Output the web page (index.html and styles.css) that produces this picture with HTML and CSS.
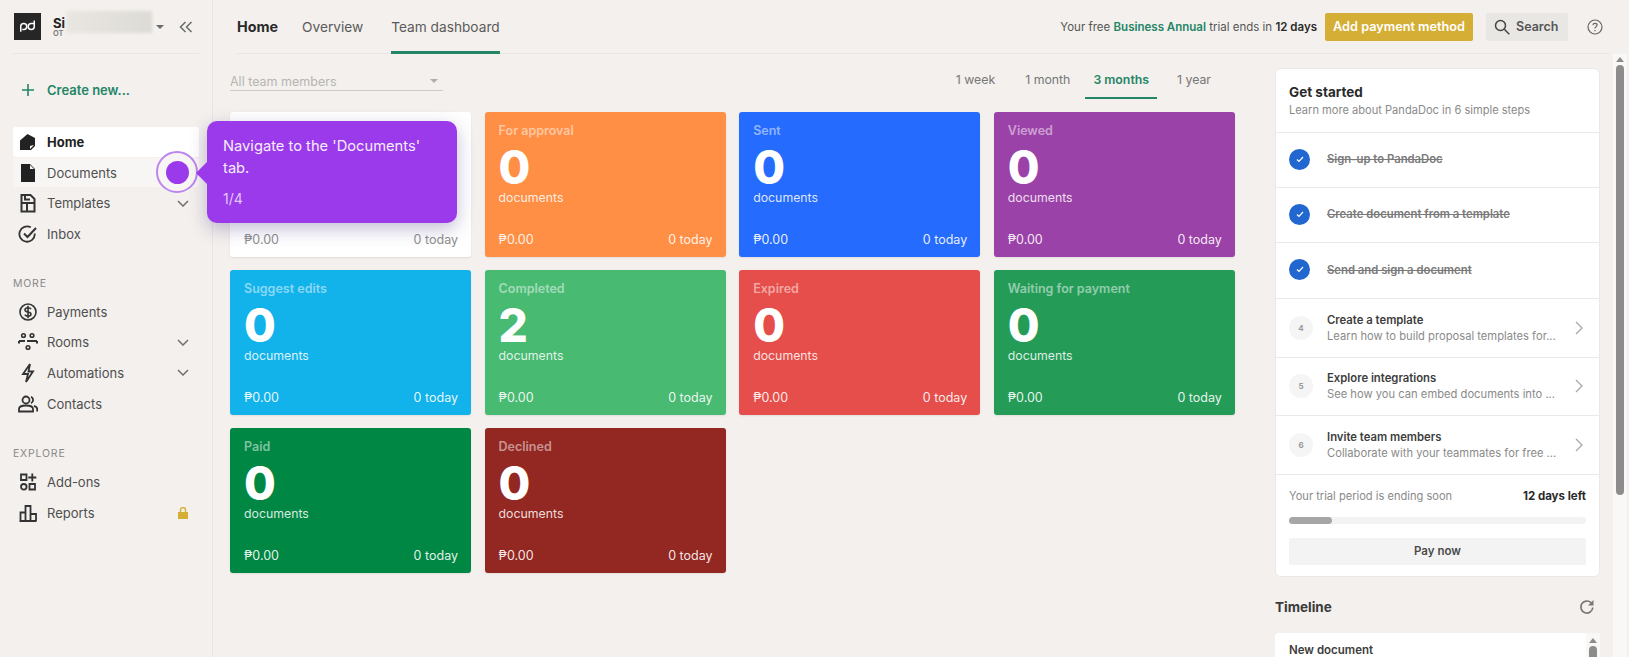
FILE: index.html
```html
<!DOCTYPE html>
<html lang="en">
<head>
<meta charset="utf-8">
<title>PandaDoc</title>
<link rel="stylesheet" href="styles.css">
</head>
<body>
<div class="app">
  <aside class="sidebar">
    <div class="account">
      <div class="logo"><svg width="28" height="28" viewBox="0 0 28 28" fill="none" stroke="#fff" stroke-width="2"><path d="M5 21v-7a4 4 0 1 1 4 4H7"/><path d="M23 6v8a4 4 0 1 1-4-4h3"/></svg></div>
      <div class="account-name"><span class="an1">Si</span><span class="an2">OT</span><span class="blur"></span></div>
      <span class="caret"></span>
      <svg class="collapse" width="14" height="12" viewBox="0 0 14 12" fill="none" stroke="#6b6b6b" stroke-width="1.5"><path d="M6.5 1 1.5 6l5 5M12.5 1l-5 5 5 5"/></svg>
    </div>
    <div class="create"><svg width="14" height="14" viewBox="0 0 14 14" stroke="#248567" stroke-width="1.6"><path d="M7 1v12M1 7h12"/></svg><span>Create new...</span></div>
    <nav class="nav">
      <a class="item active"><svg class="ic" viewBox="0 0 20 20"><path fill="#222" d="M2 8.5 9.5 2 17 6v8l-4 4H2z"/><path fill="#fff" d="m12 17 0-3 4-1z"/></svg><span>Home</span></a>
      <a class="item hover"><svg class="ic" viewBox="0 0 20 20"><path fill="#222" d="M3 1h9l5 5v13H3z"/><path fill="#f8f6f4" d="M12 2v4h4z"/></svg><span>Documents</span></a>
      <a class="item"><svg class="ic" viewBox="0 0 20 20" fill="none" stroke="#333" stroke-width="2"><path d="M3.500 2h9l4 4v12.500h-13zM3.500 10h13M9 10v8.500M7 2v4.500h5"/></svg><span>Templates</span><svg class="chev" viewBox="0 0 12 7"><path d="m1 1 5 5 5-5"/></svg></a>
      <a class="item"><svg class="ic" viewBox="0 0 20 20" fill="none" stroke="#333" stroke-width="1.8"><path d="M16.800 9.500V10a7.700 7.700 0 1 1-4-6.700"/><path stroke-width="2" d="m6 9.500 3.500 3.500L18 4"/></svg><span>Inbox</span></a>
    </nav>
    <div class="label">MORE</div>
    <nav class="nav">
      <a class="item"><svg class="ic" viewBox="0 0 20 20" fill="none" stroke="#333" stroke-width="1.600"><circle cx="10" cy="10" r="8"/><path d="M13 7.200c-.5-1-1.500-1.400-3-1.400-1.700 0-3 .8-3 2.100 0 3 6 1.300 6 4.200 0 1.300-1.300 2.100-3 2.100-1.500 0-2.600-.5-3.100-1.500M10 3.800v12.400"/></svg><span>Payments</span></a>
      <a class="item"><svg class="ic" viewBox="0 0 20 20" fill="none" stroke="#333" stroke-width="1.600"><circle cx="5.500" cy="3.500" r="1.800"/><circle cx="14" cy="3.500" r="1.800"/><circle cx="10" cy="15.500" r="1.800"/><path stroke-width="2" d="M1 9h6M9 9h10M1 9v2.500M19 9v2.500"/></svg><span>Rooms</span><svg class="chev" viewBox="0 0 12 7"><path d="m1 1 5 5 5-5"/></svg></a>
      <a class="item"><svg class="ic" viewBox="0 0 20 20" fill="none" stroke="#333" stroke-width="1.800"><path d="M12 1 5 11h5l-2 8 7-10.500h-4.500z"/></svg><span>Automations</span><svg class="chev" viewBox="0 0 12 7"><path d="m1 1 5 5 5-5"/></svg></a>
      <a class="item"><svg class="ic" viewBox="0 0 20 20" fill="none" stroke="#333" stroke-width="1.800"><circle cx="8" cy="6" r="3.500"/><path d="M1 17.500V15c0-2 2.500-3.500 7-3.500s7 1.500 7 3.500v2.500zM13 2.800a3.500 3.500 0 0 1 0 6.400M16 11.800c2 .6 3.200 1.700 3.200 3.200v2.500"/></svg><span>Contacts</span></a>
    </nav>
    <div class="label second">EXPLORE</div>
    <nav class="nav">
      <a class="item"><svg class="ic" viewBox="0 0 20 20" fill="none" stroke="#333" stroke-width="1.800"><path d="M3 2.500h5.500V8H3zM11.500 12h5.500v5.500h-5.500z"/><circle cx="5.800" cy="14.800" r="2.800"/><path d="M14.300 1.500v8M10.300 5.500h8"/></svg><span>Add-ons</span></a>
      <a class="item"><svg class="ic" viewBox="0 0 20 20" fill="none" stroke="#333" stroke-width="1.800"><path d="M1.500 18h17M2.500 18V9.500h5V18M7.500 18V3h5v15M12.500 18v-7h5.500v7"/></svg><span>Reports</span><svg class="lock" viewBox="0 0 10 12"><path fill="#d5ae35" d="M0 5h10v7H0z"/><path fill="none" stroke="#d5ae35" stroke-width="1.400" d="M2.500 5V3a2.500 2.500 0 0 1 5 0v2"/></svg></a>
    </nav>
  </aside>

  <div class="main">
    <header class="topbar">
      <div class="tabs">
        <a class="tab strong">Home</a>
        <a class="tab">Overview</a>
        <a class="tab current">Team dashboard</a>
      </div>
      <div class="trial">Your free <b class="green">Business Annual</b> trial ends in <b>12 days</b></div>
      <button class="pay">Add payment method</button>
      <button class="search"><svg width="16" height="16" viewBox="0 0 16 16" fill="none" stroke="#444" stroke-width="1.500"><circle cx="6.500" cy="6.500" r="5"/><path d="m10.300 10.300 5 5"/></svg>Search</button>
      <svg class="help" width="16" height="16" viewBox="0 0 16 16" fill="none" stroke="#666" stroke-width="1.200"><circle cx="8" cy="8" r="7"/><path d="M5.900 6.200C6 5 6.900 4.300 8 4.300c1.200 0 2.100.8 2.100 1.800 0 1.500-2.100 1.600-2.100 3.300"/><path d="M8 11v1.200"/></svg>
    </header>

    <div class="body">
      <section class="content">
        <div class="filters">
          <div class="select"><span>All team members</span><i class="caret light"></i></div>
          <div class="ranges">
            <a>1 week</a><a>1 month</a><a class="sel">3 months</a><a class="yr">1 year</a>
          </div>
        </div>
        <div class="cards">
          <div class="card white"><div class="c-foot"><span>₱0.00</span><span>0 today</span></div></div>
          <div class="card orange"><div class="c-title">For approval</div><div class="c-num">0</div><div class="c-sub">documents</div><div class="c-foot"><span>₱0.00</span><span>0 today</span></div></div>
          <div class="card blue"><div class="c-title">Sent</div><div class="c-num">0</div><div class="c-sub">documents</div><div class="c-foot"><span>₱0.00</span><span>0 today</span></div></div>
          <div class="card purple"><div class="c-title">Viewed</div><div class="c-num">0</div><div class="c-sub">documents</div><div class="c-foot"><span>₱0.00</span><span>0 today</span></div></div>
          <div class="card cyan"><div class="c-title">Suggest edits</div><div class="c-num">0</div><div class="c-sub">documents</div><div class="c-foot"><span>₱0.00</span><span>0 today</span></div></div>
          <div class="card lgreen"><div class="c-title">Completed</div><div class="c-num">2</div><div class="c-sub">documents</div><div class="c-foot"><span>₱0.00</span><span>0 today</span></div></div>
          <div class="card red"><div class="c-title">Expired</div><div class="c-num">0</div><div class="c-sub">documents</div><div class="c-foot"><span>₱0.00</span><span>0 today</span></div></div>
          <div class="card mgreen"><div class="c-title">Waiting for payment</div><div class="c-num">0</div><div class="c-sub">documents</div><div class="c-foot"><span>₱0.00</span><span>0 today</span></div></div>
          <div class="card dgreen"><div class="c-title">Paid</div><div class="c-num">0</div><div class="c-sub">documents</div><div class="c-foot"><span>₱0.00</span><span>0 today</span></div></div>
          <div class="card maroon"><div class="c-title">Declined</div><div class="c-num">0</div><div class="c-sub">documents</div><div class="c-foot"><span>₱0.00</span><span>0 today</span></div></div>
        </div>
      </section>

      <aside class="side">
        <div class="panel">
          <div class="p-head"><h2>Get started</h2><p>Learn more about PandaDoc in 6 simple steps</p></div>
          <div class="step done"><span class="tick"><svg width="8" height="7" viewBox="0 0 8 7" fill="none" stroke="#fff" stroke-width="1.200"><path d="m1 3.500 2 2 4-4.500"/></svg></span><s>Sign-up to PandaDoc</s></div>
          <div class="step done"><span class="tick"><svg width="8" height="7" viewBox="0 0 8 7" fill="none" stroke="#fff" stroke-width="1.200"><path d="m1 3.500 2 2 4-4.500"/></svg></span><s>Create document from a template</s></div>
          <div class="step done last"><span class="tick"><svg width="8" height="7" viewBox="0 0 8 7" fill="none" stroke="#fff" stroke-width="1.200"><path d="m1 3.500 2 2 4-4.500"/></svg></span><s>Send and sign a document</s></div>
          <div class="step todo"><span class="no">4</span><div class="st"><b>Create a template</b><em>Learn how to build proposal templates for...</em></div><svg class="arrow" width="8" height="14" viewBox="0 0 8 14" fill="none" stroke="#a8a8a8" stroke-width="1.300"><path d="m1 1 6 6-6 6"/></svg></div>
          <div class="step todo"><span class="no">5</span><div class="st"><b>Explore integrations</b><em>See how you can embed documents into ...</em></div><svg class="arrow" width="8" height="14" viewBox="0 0 8 14" fill="none" stroke="#a8a8a8" stroke-width="1.300"><path d="m1 1 6 6-6 6"/></svg></div>
          <div class="step todo"><span class="no">6</span><div class="st"><b>Invite team members</b><em>Collaborate with your teammates for free ...</em></div><svg class="arrow" width="8" height="14" viewBox="0 0 8 14" fill="none" stroke="#a8a8a8" stroke-width="1.300"><path d="m1 1 6 6-6 6"/></svg></div>
          <div class="p-foot">
            <div class="t-row"><span>Your trial period is ending soon</span><b>12 days left</b></div>
            <div class="bar"><div class="fill"></div></div>
            <button class="paynow">Pay now</button>
          </div>
        </div>
        <div class="tl-head"><h3>Timeline</h3><svg width="16" height="16" viewBox="0 0 16 16" fill="none" stroke="#777" stroke-width="1.700"><path d="M13.800 8.500A6 6 0 1 1 12 3.700"/><path fill="#777" stroke="none" d="M14.500 1v5.500H9z"/></svg></div>
        <div class="tl-row">
          <div class="tl-card"><b>New document</b></div>
          <div class="mini-scroll"><i class="up"></i><i class="thumb"></i></div>
        </div>
      </aside>
      <div class="page-scroll"><i class="up"></i><i class="thumb"></i></div>
    </div>
  </div>
</div>

<div class="beacon"><span></span></div>
<div class="tooltip">
  <p>Navigate to the 'Documents' tab.</p>
  <small>1/4</small>
</div>
</body>
</html>
```
FILE: styles.css
```css
* { box-sizing: border-box; }
html, body { margin: 0; height: 100%; overflow: hidden; }
body { background: #f3f0ed; font-family: "Inter", "Liberation Sans", sans-serif; color: #4a4a4a; font-size: 14px; }
a { display: block; }
button { font-family: inherit; border: 0; }

.app { display: flex; height: 657px; overflow: hidden; }

.sidebar { width: 213px; flex: none; border-right: 1px solid #e8e5e2; padding: 0 13px; }
.account { display: flex; align-items: center; height: 54px; border-bottom: 1px solid #e8e5e2; padding-left: 1px; }
.logo { width: 27px; height: 27px; background: #262626; display: flex; align-items: center; justify-content: center; }
.logo svg { width: 21px; height: 21px; }
.account-name { position: relative; width: 108px; height: 22px; margin-left: 12px; display: flex; flex-direction: column; }
.an1 { font-size: 13px; font-weight: 700; color: #222; line-height: 13px; margin-top: 1px; }
.an2 { font-size: 7.5px; font-weight: 600; color: #777; line-height: 8px; }
.blur { position: absolute; left: 13px; top: -5px; width: 86px; height: 22px; background: linear-gradient(90deg, #e9e6e2, #dddbd6); filter: blur(1.5px); }
.caret { width: 0; height: 0; border-left: 4.5px solid transparent; border-right: 4.5px solid transparent; border-top: 4.500px solid #6b6b6b; margin-left: -5px; }
.collapse { margin-left: 15px; }

.create { display: flex; align-items: center; gap: 12px; height: 20px; margin: 26px 0 0 8px; font-weight: 600; font-size: 13px; color: #248567; }

.nav { display: flex; flex-direction: column; gap: 1px; }
.create + .nav { margin-top: 27px; }
.item { display: flex; align-items: center; height: 29.700px; padding-left: 3px; border-radius: 2px; font-size: 13px; color: #4f4f4f; }
.item span { margin-left: 11px; }
.item.active { background: #fff; color: #1f1f1f; font-weight: 700; }
.item.hover { background: #f8f6f4; }
.ic { width: 20px; height: 20px; flex: none; margin-left: 2px; margin-right: -2px; }
.chev { width: 12px; height: 7px; margin-left: auto; margin-right: 10px; fill: none; stroke: #6f6f6f; stroke-width: 1.500; }
.lock { width: 10px; height: 12px; margin-left: auto; margin-right: 11px; }
.label { font-size: 10.500px; letter-spacing: .8px; color: #8a8a8a; margin: 28px 0 6px; line-height: 14px; }
.label.second { margin: 28px 0 7px; }

.main { flex: 1; min-width: 0; display: flex; flex-direction: column; }
.topbar { display: flex; align-items: center; height: 54px; margin: 0 20px 0 24px; border-bottom: 1px solid #e8e5e2; flex: none; }
.tabs { display: flex; height: 54px; margin-right: auto; }
.tab { padding: 0; margin-right: 28px; line-height: 54px; height: 54px; font-size: 13.700px; color: #5a5a5a; }
.tab.strong { font-weight: 700; color: #2a2a2a; margin-right: 24px; font-size: 14.300px; }
.tab.current { border-bottom: 3px solid #248567; }
.trial { font-size: 11.500px; color: #555; margin-right: 8px; white-space: nowrap; }
.trial b { font-weight: 600; color: #2a2a2a; }
.trial b.green { color: #248567; }
.pay { flex: none; width: 148px; height: 28px; background: #d5ae35; color: #fff; font-weight: 600; font-size: 12.700px; border-radius: 2px; padding: 0; white-space: nowrap; }
.search { flex: none; display: flex; align-items: center; gap: 6px; width: 82px; height: 28px; margin-left: 13px; background: #e9e7e4; color: #555; font-weight: 600; font-size: 12.500px; border-radius: 2px; padding: 0 0 0 8px; }
.help { margin-left: 19px; margin-right: 6px; flex: none; }

.body { flex: 1; min-height: 0; display: flex; padding-left: 17px; }
.content { width: 1006px; flex: none; }
.filters { display: flex; height: 58px; }
.select { width: 213px; height: 25px; margin-top: 12px; border-bottom: 1px solid #cfccc8; display: flex; align-items: center; justify-content: space-between; padding-right: 5px; color: #b7b5b2; font-size: 12.500px; padding-top: 6px; }
.caret.light { border-top-color: #b0aeab; margin: 0; }
.ranges { display: flex; margin-left: auto; margin-right: 17px; height: 35px; margin-top: 10px; font-size: 12.300px; color: #777; }
.ranges a { padding: 0 8px; margin-left: 14px; line-height: 31px; height: 35px; }
.ranges a.sel { color: #248567; font-weight: 600; border-bottom: 2px solid #248567; margin-left: 7px; }
.ranges a.yr { margin-left: 12px; }

.cards { display: grid; grid-template-columns: repeat(4, 241px); grid-auto-rows: 145px; column-gap: 13.600px; row-gap: 13px; }
.card { border-radius: 3px; color: #fff; padding: 11px 13px 0 14px; display: flex; flex-direction: column; box-shadow: 0 1px 2px rgba(0,0,0,.08); }
.c-title { font-size: 12.500px; font-weight: 600; color: rgba(255,255,255,.5); line-height: 16px; }
.c-num { font-size: 46px; font-weight: 800; line-height: 46px; margin-top: 5px; }
.c-sub { font-size: 12.300px; line-height: 16px; color: rgba(255,255,255,.85); }
.c-foot { display: flex; justify-content: space-between; margin-top: auto; margin-bottom: 9px; font-size: 12.500px; line-height: 16px; color: rgba(255,255,255,.9); }
.white { background: #fff; color: #4a4a4a; }
.white .c-foot { color: #8e8e8e; }
.orange { background: #ff8f45; }
.blue { background: #246bfe; }
.purple { background: #9b42a8; }
.cyan { background: #12b2ea; }
.lgreen { background: #48ba72; }
.red { background: #e54e4a; }
.mgreen { background: #249c58; }
.dgreen { background: #018744; }
.maroon { background: #932722; }

.side { width: 325px; flex: none; margin-left: 39px; padding-top: 14px; overflow: hidden; }
.panel { background: #fff; border-radius: 6px; border: 1px solid #ebe9e7; height: 509px; display: flex; flex-direction: column; }
.p-head { height: 64px; padding: 14px 13px 0; border-bottom: 1px solid #ebe9e7; flex: none; }
.p-head h2 { margin: 0; font-size: 13.500px; font-weight: 700; color: #2a2a2a; line-height: 18px; }
.p-head p { margin: 2px 0 0; font-size: 11.100px; color: #8a8a8a; line-height: 15px; }
.step { display: flex; align-items: center; padding: 0 13px; border-bottom: 1px solid #ebe9e7; flex: none; }
.step.done { height: 55px; padding-bottom: 2px; }
.step.done.last { height: 56px; }
.step.todo { height: 58.500px; }
.tick { width: 21px; height: 21px; border-radius: 50%; background: #2167cf; display: flex; align-items: center; justify-content: center; margin-right: 17px; flex: none; }
.step s { font-size: 11.300px; font-weight: 600; color: #7a7a7a; }
.no { width: 24px; height: 24px; border-radius: 50%; background: #f5f5f5; color: #999; font-size: 8px; font-weight: 700; display: flex; align-items: center; justify-content: center; margin-right: 14px; flex: none; }
.st { display: flex; flex-direction: column; flex: 1; min-width: 0; }
.st b { font-size: 11.300px; font-weight: 600; color: #3d3d3d; line-height: 16px; }
.st em { font-style: normal; font-size: 11.200px; color: #8a8a8a; line-height: 16px; white-space: nowrap; }
.arrow { margin-right: 3px; flex: none; }
.p-foot { padding: 13px 13px 0; }
.t-row { display: flex; justify-content: space-between; align-items: center; font-size: 11.100px; color: #8a8a8a; line-height: 16px; }
.t-row b { color: #2a2a2a; font-weight: 700; font-size: 11.500px; }
.bar { height: 7px; border-radius: 4px; background: #f3f3f3; margin-top: 13px; }
.fill { width: 43px; height: 7px; border-radius: 4px; background: #a6a6a6; }
.paynow { display: block; width: 100%; height: 27px; margin-top: 14px; background: #f3f3f3; border-radius: 2px; font-size: 11.500px; font-weight: 600; color: #4a4a4a; }
.tl-head { display: flex; justify-content: space-between; align-items: center; height: 30px; margin-top: 15px; padding-right: 5px; }
.tl-head h3 { margin: 0; font-size: 13.500px; font-weight: 700; color: #3a3a3a; }
.tl-row { display: flex; margin-top: 11px; }
.tl-card { width: 314px; height: 24px; background: #fff; border-radius: 4px 4px 0 0; padding: 10px 14px 0; font-size: 11.500px; line-height: 14px; }
.tl-card b { font-weight: 600; color: #3d3d3d; }
.mini-scroll { width: 14px; height: 24px; margin-left: -2px; overflow: hidden; display: flex; flex-direction: column; align-items: center; padding-top: 5px; gap: 3px; background: #f9f8f7; }
.mini-scroll .up, .page-scroll .up { width: 0; height: 0; border-left: 4px solid transparent; border-right: 4px solid transparent; border-bottom: 5px solid #8c8c8c; flex: none; }
.mini-scroll .thumb { width: 8px; height: 20px; border-radius: 4px; background: #8c8c8c; flex: none; }
.page-scroll { width: 14px; margin-left: 13px; background: #f9f8f7; display: flex; flex-direction: column; align-items: center; padding-top: 3px; gap: 3px; flex: none; }
.page-scroll .thumb { width: 8px; height: 430px; border-radius: 4px; background: #8c8c8c; }

.tooltip { position: absolute; left: 207px; top: 121px; width: 250px; height: 102px; background: #9b3aea; border-radius: 10px; padding: 15px 16px; color: #fff; box-shadow: 0 6px 18px rgba(60,40,120,.3); }
.tooltip::before { content: ""; position: absolute; left: -11px; top: 41px; width: 0; height: 0; border-top: 11px solid transparent; border-bottom: 11px solid transparent; border-right: 11px solid #9b3aea; }
.tooltip p { margin: 0; font-size: 14.700px; line-height: 21.500px; color: #f6ecff; }
.tooltip small { display: block; margin-top: 11px; font-size: 14px; line-height: 18px; color: #e3c8fb; }
.beacon { position: absolute; left: 156px; top: 151px; width: 42px; height: 42px; border-radius: 50%; border: 2px solid #bd85ee; background: #f8f6f4; display: flex; align-items: center; justify-content: center; }
.beacon span { width: 23px; height: 23px; border-radius: 50%; background: #9b3aea; }
```
